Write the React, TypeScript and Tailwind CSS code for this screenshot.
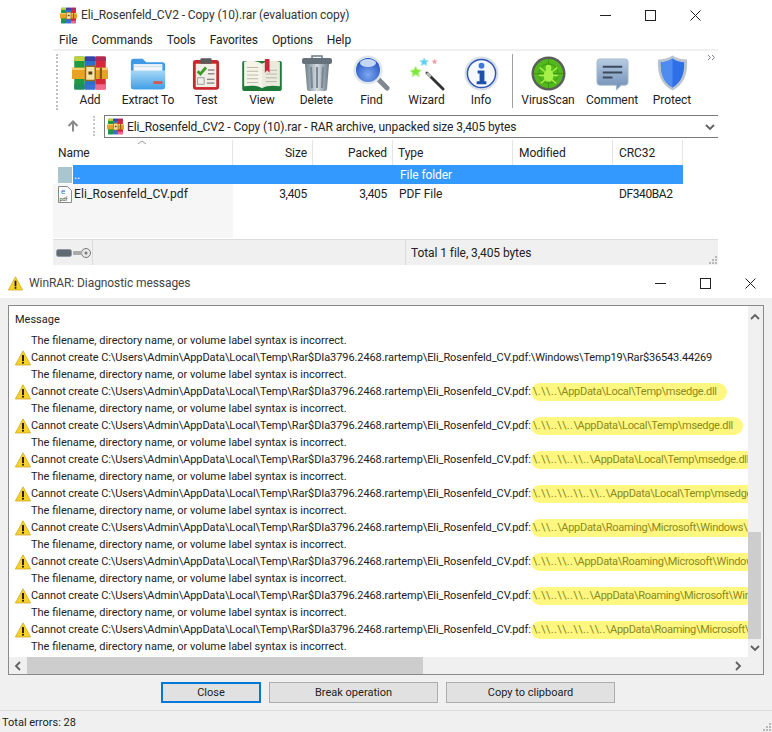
import React from "react";

const font = { fontFamily: 'Roboto,"Noto Sans",sans-serif' };

function RarLogo({ s = 48 }: { s?: number }) {
  return (
    <svg width={s} height={s} viewBox="0 0 48 48">
      <rect x="3" y="2" width="14" height="44" rx="2" fill="#1f9a3c" />
      <rect x="17" y="2" width="14" height="44" rx="2" fill="#2a6fd0" />
      <rect x="31" y="2" width="14" height="44" rx="2" fill="#d8263a" />
      <rect x="3" y="2" width="14" height="6" fill="#c3d23a" />
      <rect x="17" y="2" width="14" height="6" fill="#3c3fa8" />
      <rect x="31" y="2" width="14" height="6" fill="#b02a55" />
      <rect x="3" y="39" width="14" height="7" fill="#1d8f5c" />
      <rect x="17" y="39" width="14" height="7" fill="#3b6fd8" />
      <rect x="31" y="39" width="14" height="7" fill="#ef6a8f" />
      <rect x="0" y="17" width="48" height="15" fill="#e9a324" />
      <rect x="0" y="17" width="48" height="3" fill="#f6cf6a" />
      <rect x="18" y="15" width="13" height="19" rx="1" fill="#f5e3a6" stroke="#9a6a1a" strokeWidth="2" />
      <rect x="22" y="22" width="5" height="4" fill="#5a3c10" />
      <rect x="37" y="17" width="3" height="15" fill="#8a5a14" />
    </svg>
  );
}

function Folder() {
  return (
    <svg width="36" height="34" viewBox="0 0 40 36">
      <defs>
        <linearGradient id="fb" x1="0" y1="0" x2="0" y2="1">
          <stop offset="0" stopColor="#a9d8f8" />
          <stop offset="1" stopColor="#3f9fe6" />
        </linearGradient>
      </defs>
      <path d="M1 4a3 3 0 0 1 3-3h10l4 4h18a3 3 0 0 1 3 3v24a3 3 0 0 1-3 3H4a3 3 0 0 1-3-3z" fill="#3d9ae6" />
      <rect x="4" y="7" width="32" height="8" fill="#f2f6fa" />
      <path d="M1 14h38v18a3 3 0 0 1-3 3H4a3 3 0 0 1-3-3z" fill="url(#fb)" />
      <rect x="4" y="9" width="32" height="1" fill="#c5d6e4" />
      <rect x="26" y="26" width="10" height="3" fill="#d8564a" />
    </svg>
  );
}

function Clipboard() {
  return (
    <svg width="28" height="34" viewBox="0 0 30 36">
      <rect x="1" y="3" width="28" height="32" rx="3" fill="#c8282c" />
      <rect x="4" y="7" width="22" height="25" fill="#f2eee8" />
      <rect x="9" y="1" width="12" height="6" rx="1" fill="#5a5a5a" />
      <path d="M6 15l3 3 6-7" stroke="#3f9a2c" strokeWidth="3" fill="none" />
      <rect x="17" y="13" width="7" height="1.5" fill="#888" />
      <rect x="17" y="17" width="7" height="1.5" fill="#888" />
      <rect x="6" y="22" width="7" height="7" fill="none" stroke="#999" />
      <rect x="16" y="23" width="8" height="1.5" fill="#888" />
      <rect x="16" y="27" width="8" height="1.5" fill="#888" />
    </svg>
  );
}

function Book() {
  return (
    <svg width="42" height="32" viewBox="0 0 42 34">
      <rect x="0" y="2" width="42" height="32" rx="2" fill="#1f7a3a" />
      <path d="M2 3c7-2 14-1 19 2v26c-5-3-12-3-19-2z" fill="#f6f4e8" />
      <path d="M40 3c-7-2-14-1-19 2v26c5-3 12-3 19-2z" fill="#eceadc" />
      <g stroke="#b5b5a8" strokeWidth="1">
        <path d="M5 9h12M5 13h12M5 17h12M5 21h12M5 25h12M25 12h12M25 16h12M25 20h12M25 24h12" />
      </g>
      <path d="M24 0h5v15l-2.5-3-2.5 3z" fill="#c8283c" />
    </svg>
  );
}

function Trash() {
  return (
    <svg width="30" height="36" viewBox="0 0 30 36">
      <defs>
        <linearGradient id="tr" x1="0" y1="0" x2="1" y2="0">
          <stop offset="0" stopColor="#6d7f8c" />
          <stop offset="0.5" stopColor="#d5dde2" />
          <stop offset="1" stopColor="#6a7a86" />
        </linearGradient>
      </defs>
      <path d="M10 4V1h10v3" fill="none" stroke="#6d7a84" strokeWidth="1.5" />
      <rect x="0" y="3" width="30" height="6" rx="2" fill="#65727c" />
      <path d="M3 9h24l-2 25a2 2 0 0 1-2 2H7a2 2 0 0 1-2-2z" fill="url(#tr)" />
      <path d="M9 12l1 21M15 12v21M21 12l-1 21" stroke="#7a8894" strokeWidth="2" />
    </svg>
  );
}

function Magnifier() {
  return (
    <svg width="38" height="36" viewBox="0 0 38 36">
      <defs>
        <radialGradient id="mg" cx="0.5" cy="0.7" r="0.7">
          <stop offset="0" stopColor="#7ea8f0" />
          <stop offset="1" stopColor="#1f4fc0" />
        </radialGradient>
      </defs>
      <path d="M25 24l9 9" stroke="#808890" strokeWidth="5" strokeLinecap="round" />
      <circle cx="15" cy="15" r="14.5" fill="#dfe6ec" />
      <circle cx="15" cy="15" r="12" fill="url(#mg)" />
      <ellipse cx="15" cy="8" rx="8" ry="4" fill="#c4d8f6" />
    </svg>
  );
}

function Wand() {
  return (
    <svg width="36" height="34" viewBox="0 0 38 36">
      <path d="M19 17l17 17" stroke="#333" strokeWidth="3" strokeLinecap="round" />
      <path d="M19 17l4 4" stroke="#bbb" strokeWidth="3" />
      <path d="M7 10l2 3.500 4 .5-3 2.800.8 4L7 18.600 3.200 21l.8-4-3-2.800 4-.5z" fill="#7fe83c" stroke="#b8f48a" />
      <path d="M16 1l1.500 2.600 3 .4-2.200 2 .6 3L16 7.700 13.100 9l.6-3-2.200-2 3-.4z" fill="#5fd0ee" stroke="#a8e6f6" />
      <path d="M27 2l1 1.800 2 .2-1.500 1.400.4 2L27 6.500l-1.900.9.400-2L24 4l2-.2z" fill="#f3a0a8" />
    </svg>
  );
}

function InfoIcon() {
  return (
    <svg width="35" height="35" viewBox="0 0 36 36">
      <circle cx="18" cy="18" r="17.500" fill="#d8dfe8" />
      <circle cx="18" cy="18" r="14.500" fill="#f5f8fc" stroke="#2f55b4" strokeWidth="1.500" />
      <circle cx="18" cy="10" r="3" fill="#3f78d8" />
      <path d="M14 15h7v11h2v3H13v-3h3v-8h-2z" fill="#1f50a8" />
    </svg>
  );
}

function Bug() {
  return (
    <svg width="35" height="35" viewBox="0 0 36 36">
      <circle cx="18" cy="18" r="17.500" fill="#5a5f5a" />
      <circle cx="18" cy="18" r="15" fill="#53b81c" />
      <circle cx="18" cy="18" r="10" fill="none" stroke="#3d9a14" />
      <path d="M18 3v30M3 18h30" stroke="#3d9a14" />
      <ellipse cx="18" cy="20" rx="5" ry="6.500" fill="#a6f04a" />
      <circle cx="18" cy="12" r="3" fill="#a6f04a" />
      <path d="M9 12l5 4M27 12l-5 4M8 20h6M28 20h-6M10 28l5-4M26 28l-5-4" stroke="#a6f04a" strokeWidth="1.500" />
    </svg>
  );
}

function CommentIcon() {
  return (
    <svg width="33" height="33" viewBox="0 0 34 34">
      <defs>
        <linearGradient id="cm" x1="0" y1="0" x2="0" y2="1">
          <stop offset="0" stopColor="#b7cce4" />
          <stop offset="1" stopColor="#6e8cb4" />
        </linearGradient>
      </defs>
      <path d="M4 1h26a3 3 0 0 1 3 3v21a3 3 0 0 1-3 3h-4l-5 5v-5H4a3 3 0 0 1-3-3V4a3 3 0 0 1 3-3z" fill="url(#cm)" stroke="#a8b8c8" />
      <path d="M7 9h20M7 15h20M7 20h10" stroke="#3c4a5c" strokeWidth="2" />
    </svg>
  );
}

function Shield() {
  return (
    <svg width="31" height="36" viewBox="0 0 32 36">
      <path d="M16 0c4 3 9 4 15 4 1 14-3 26-15 32C4 30 0 18 1 4c6 0 11-1 15-4z" fill="#b9c4d0" />
      <path d="M16 3c4 3 8 3.500 12 4 .5 12-3 21-12 26C7 28 3.500 19 4 7c4-.500 8-1 12-4z" fill="#2f6fe8" />
      <path d="M16 3v30C7 28 3.500 19 4 7c4-.500 8-1 12-4z" fill="#4f8cf2" />
    </svg>
  );
}

function Warn({ s = 16, cls = "" }: { s?: number; cls?: string }) {
  return (
    <svg width={s} height={s} viewBox="0 0 16 16" className={`shrink-0 ${cls}`}>
      <path d="M8 .8L15.600 15H.4z" fill="#f6d32a" stroke="#c9a21a" strokeWidth=".7" strokeLinejoin="round" />
      <rect x="7.100" y="5" width="1.800" height="6" fill="#111" />
      <rect x="7.100" y="11.800" width="1.800" height="1.800" fill="#111" />
    </svg>
  );
}

function Caret({ d, cls = "" }: { d: string; cls?: string }) {
  return (
    <svg width="10" height="10" viewBox="0 0 10 10" className={cls}>
      <path d={d} fill="none" stroke="#606060" strokeWidth="1.800" />
    </svg>
  );
}

function WinControls() {
  return (
    <div className="flex items-center gap-[34px]">
      <svg width="11" height="11" viewBox="0 0 11 11"><path d="M0 5.500h11" stroke="#222" /></svg>
      <svg width="11" height="11" viewBox="0 0 11 11"><rect x=".5" y=".5" width="10" height="10" fill="none" stroke="#222" /></svg>
      <svg width="11" height="11" viewBox="0 0 11 11"><path d="M.5.500l10 10M10.500.500l-10 10" stroke="#222" /></svg>
    </div>
  );
}

function Grip() {
  return (
    <svg width="10" height="10" viewBox="0 0 10 10">
      <g fill="#b8b8b8">
        <rect x="7" y="1" width="2" height="2" /><rect x="7" y="4" width="2" height="2" /><rect x="7" y="7" width="2" height="2" />
        <rect x="4" y="4" width="2" height="2" /><rect x="4" y="7" width="2" height="2" /><rect x="1" y="7" width="2" height="2" />
      </g>
    </svg>
  );
}

const tools: [string, string, React.ReactNode][] = [
  ["Add", "w-[58px]", <RarLogo s={36} />],
  ["Extract To", "w-[58px]", <Folder />],
  ["Test", "w-[58px]", <Clipboard />],
  ["View", "w-[54px]", <Book />],
  ["Delete", "w-[55px]", <Trash />],
  ["Find", "w-[55px]", <Magnifier />],
  ["Wizard", "w-[55px]", <Wand />],
  ["Info", "w-[54px]", <InfoIcon />],
];
const tools2: [string, string, React.ReactNode][] = [
  ["VirusScan", "w-[62px]", <Bug />],
  ["Comment", "w-[66px]", <CommentIcon />],
  ["Protect", "w-[54px]", <Shield />],
];

function Tool({ t }: { t: [string, string, React.ReactNode] }) {
  return (
    <div className={`${t[1]} flex flex-col items-center shrink-0`}>
      <div className="h-[37px] flex items-end justify-center">{t[2]}</div>
      <div className="mt-[1px] leading-[16px] whitespace-nowrap">{t[0]}</div>
    </div>
  );
}

const msg = "The filename, directory name, or volume label syntax is incorrect.";
const pre = "Cannot create C:\\Users\\Admin\\AppData\\Local\\Temp\\Rar$DIa3796.2468.rartemp\\Eli_Rosenfeld_CV.pdf:";
const one = "\\.\\\\..";
const two = "\\.\\\\..\\\\..";
const three = "\\.\\\\..\\\\..\\\\..";
const four = "\\.\\\\..\\\\..\\\\..\\\\..";
const local = "\\AppData\\Local\\Temp\\msedge.dll";
const roaming = "\\AppData\\Roaming\\Microsoft\\Windows\\Start Menu";
const rows = [
  { plain: "\\Windows\\Temp19\\Rar$36543.44269" },
  { a: one, b: local },
  { a: two, b: local },
  { a: three, b: local },
  { a: four, b: local },
  { a: one, b: roaming },
  { a: two, b: roaming },
  { a: three, b: roaming },
  { a: four, b: roaming },
];

const cols = [
  ["Name", "w-[180px] pl-[5px] text-left"],
  ["Size", "w-[80px] pr-[5px] text-right"],
  ["Packed", "w-[80px] pr-[5px] text-right"],
  ["Type", "w-[120px] pl-[5px] text-left"],
  ["Modified", "w-[100px] pl-[6px] text-left"],
  ["CRC32", "w-[70px] pl-[6px] text-left"],
];

function Msg() {
  return <div className="h-[17px] leading-[18px] pl-[16px] whitespace-nowrap">{msg}</div>;
}

export default function App() {
  return (
    <div style={font} className="w-[772px] h-[732px] overflow-hidden bg-white text-[12px] text-[#222] flex flex-col">
      {/* WinRAR main window */}
      <div className="ml-[53px] w-[665px] h-[265px] flex flex-col shrink-0 tracking-[-0.08px]">
        <div className="h-[30px] flex items-center pl-[7px] shrink-0">
          <RarLogo s={17} />
          <span className="ml-[4px] text-[#333]">Eli_Rosenfeld_CV2 - Copy (10).rar (evaluation copy)</span>
          <div className="ml-auto mr-[17px]"><WinControls /></div>
        </div>
        <div className="h-[19px] flex items-center pl-[6px] gap-[14px] shrink-0">
          {["File", "Commands", "Tools", "Favorites", "Options", "Help"].map((m) => (
            <span key={m}>{m}</span>
          ))}
        </div>
        <div className="h-[65px] border-t-2 border-[#f0f0f0] relative flex pl-[3px] pt-[3px] shrink-0">
          <div className="w-[3px] h-[56px] mr-[2px] border-l-2 border-dotted border-[#c0c0c0] shrink-0" />
          {tools.map((t) => <Tool key={t[0]} t={t} />)}
          <div className="ml-[4px] mr-[4px] w-px h-[54px] bg-[#a0a0a0] shrink-0" />
          {tools2.map((t) => <Tool key={t[0]} t={t} />)}
          <svg width="9" height="7" viewBox="0 0 9 7" className="absolute right-[2px] top-[3px]">
            <path d="M1 1l2.500 2.500L1 6M5 1l2.500 2.500L5 6" fill="none" stroke="#7a8090" />
          </svg>
        </div>
        <div className="h-[24px] flex items-center shrink-0">
          <div className="w-[40px] flex justify-center">
            <svg width="12" height="12" viewBox="0 0 12 12"><path d="M6 11.500V1.500M1.500 6L6 1.500 10.500 6" fill="none" stroke="#8a8a8a" strokeWidth="2" /></svg>
          </div>
          <div className="w-px h-[20px] mr-[9px] border-l-2 border-dotted border-[#c8c8c8]" />
          <div className="flex-1 h-[23px] self-end border border-r-0 border-[#7a7a7a] flex items-center pl-[2px] pr-[3px]">
            <RarLogo s={17} />
            <span className="ml-[3px] tracking-[-0.1px]">Eli_Rosenfeld_CV2 - Copy (10).rar - RAR archive, unpacked size 3,405 bytes</span>
            <Caret d="M1 3l4 4 4-4" cls="ml-auto" />
          </div>
        </div>
        <div className="h-[25px] mt-[2px] flex items-center relative shrink-0">
          {cols.map((c) => (
            <div key={c[0]} className={`${c[1]} h-[25px] leading-[27px] border-r border-[#e5e5e5] shrink-0`}>{c[0]}</div>
          ))}
          <svg width="10" height="5" viewBox="0 0 10 5" className="absolute left-[84px] top-0"><path d="M1 4l4-3 4 3" fill="none" stroke="#999" /></svg>
        </div>
        <div className="flex flex-col flex-1 min-h-0 relative">
          <div className="h-[19px] flex items-center shrink-0">
            <svg width="14" height="16" viewBox="0 0 14 16" className="ml-[5px] mr-[1px]"><rect width="14" height="16" fill="#a9c6cf" /></svg>
            <div className="w-[610px] h-[19px] bg-[#3399ff] text-white flex items-center">
              <span className="w-[327px] pl-[1px]">..</span>
              <span>File folder</span>
            </div>
          </div>
          <div className="flex-1 flex min-h-0">
            <div className="w-[180px] bg-[#f6f6f6] shrink-0 h-[54px]">
              <div className="h-[20px] flex items-center">
                <svg width="14" height="17" viewBox="0 0 14 17" className="ml-[5px] mr-[2px]">
                  <path d="M.5.500h9l4 4v12H.500z" fill="#fbfbfb" stroke="#8a8a8a" />
                  <text x="3" y="7.500" fontSize="8" fill="#1f6fd0" fontFamily="Roboto">e</text>
                  <text x="1.500" y="14.500" fontSize="5.500" fill="#444" fontFamily="Roboto">pdf</text>
                </svg>
                <span className="tracking-[0.1px]">Eli_Rosenfeld_CV.pdf</span>
              </div>
            </div>
            <div className="flex h-[20px] items-center">
              <div className="w-[80px] pr-[6px] text-right tracking-[-0.3px]">3,405</div>
              <div className="w-[80px] pr-[6px] text-right tracking-[-0.3px]">3,405</div>
              <div className="w-[120px] pl-[6px]">PDF File</div>
              <div className="w-[100px]" />
              <div className="pl-[6px] tracking-[-0.4px]">DF340BA2</div>
            </div>
          </div>
        </div>
        <div className="h-[26px] bg-[#f0f0f0] border-t border-[#dcdcdc] flex items-center shrink-0 relative">
          <div className="w-[40px] h-full border-r border-[#dcdcdc] flex items-center pl-[3px] gap-[1px]">
            <svg width="16" height="8" viewBox="0 0 16 8"><rect x=".5" y=".5" width="15" height="7" rx="2" fill="#606870" stroke="#8a98a8" /></svg>
            <svg width="19" height="10" viewBox="0 0 19 10"><circle cx="13" cy="5" r="4.500" fill="#e8e8e8" stroke="#777" /><circle cx="13" cy="5" r="1.500" fill="#777" /><rect x="0" y="3" width="9" height="4" rx="1" fill="#aaa" /></svg>
          </div>
          <div className="w-[313px] border-r border-[#dcdcdc] h-full" />
          <span className="ml-[5px]">Total 1 file, 3,405 bytes</span>
          <div className="ml-auto self-end"><Grip /></div>
        </div>
      </div>

      {/* Diagnostic messages */}
      <div className="h-[33px] flex items-center pl-[8px] pr-[16px] pt-[3px] shrink-0">
        <Warn s={15} />
        <span className="ml-[6px] text-[#444] tracking-[-0.08px]">WinRAR: Diagnostic messages</span>
        <div className="ml-auto"><WinControls /></div>
      </div>
      <div className="flex-1 bg-[#f0f0f0] flex flex-col min-h-0 text-[11px]">
        <div className="mx-[8px] mt-[7px] h-[370px] border border-[#8a8a8a] bg-white flex flex-col shrink-0">
          <div className="flex flex-1 min-h-0">
            <div className="w-[739px] overflow-hidden shrink-0 pl-[6px]">
              <div className="h-[26px] leading-[26px] pt-[1px]">Message</div>
              <Msg />
              {rows.map((r, i) => (
                <React.Fragment key={i}>
                  <div className="h-[17px] flex items-start whitespace-nowrap">
                    <Warn cls="self-center" />
                    <span className="tracking-[-0.08px] leading-[18px]">{pre}</span>
                    {r.plain && <span className="leading-[18px] tracking-[-0.15px]">{r.plain}</span>}
                    {r.a && (
                      <span className="h-[18px] leading-[18px] pl-[2px] pr-[10px] rounded-[9px] bg-[#fff77f] text-[#8a8a1c] shrink-0">
                        <span className="tracking-[0.35px]">{r.a}</span>
                        <span className="tracking-[-0.3px]">{r.b}</span>
                      </span>
                    )}
                  </div>
                  <Msg />
                </React.Fragment>
              ))}
            </div>
            <div className="flex-1 bg-[#f0f0f0] flex flex-col pr-[2px]">
              <div className="h-[20px] flex items-center justify-center pt-[2px]"><Caret d="M1 7l4-4 4 4" /></div>
              <div className="h-[206px]" />
              <div className="h-[107px] bg-[#cdcdcd]" />
              <div className="flex-1 flex items-center justify-center"><Caret d="M1 3l4 4 4-4" /></div>
            </div>
          </div>
          <div className="h-[17px] bg-[#f0f0f0] flex items-center shrink-0">
            <div className="w-[18px] flex justify-center"><Caret d="M7 1L3 5l4 4" /></div>
            <div className="w-[396px] h-full bg-[#cdcdcd]" />
            <div className="ml-auto mr-[20px]"><Caret d="M3 1l4 4-4 4" /></div>
          </div>
        </div>
        <div className="h-[21px] mt-[7px] flex pl-[161px] gap-[8px] shrink-0">
          <div className="w-[100px] border-2 border-[#0078d7] bg-[#e1e1e1] flex items-center justify-center pt-px">Close</div>
          <div className="w-[169px] border border-[#adadad] bg-[#e1e1e1] flex items-center justify-center pt-px">Break operation</div>
          <div className="w-[169px] border border-[#adadad] bg-[#e1e1e1] flex items-center justify-center pt-px">Copy to clipboard</div>
        </div>
        <div className="mt-[7px] flex-1 border-t border-[#dcdcdc] flex items-center pl-[2px] pt-[3px] relative">
          <span>Total errors: 28</span>
          <div className="ml-auto self-end"><Grip /></div>
        </div>
      </div>
    </div>
  );
}
